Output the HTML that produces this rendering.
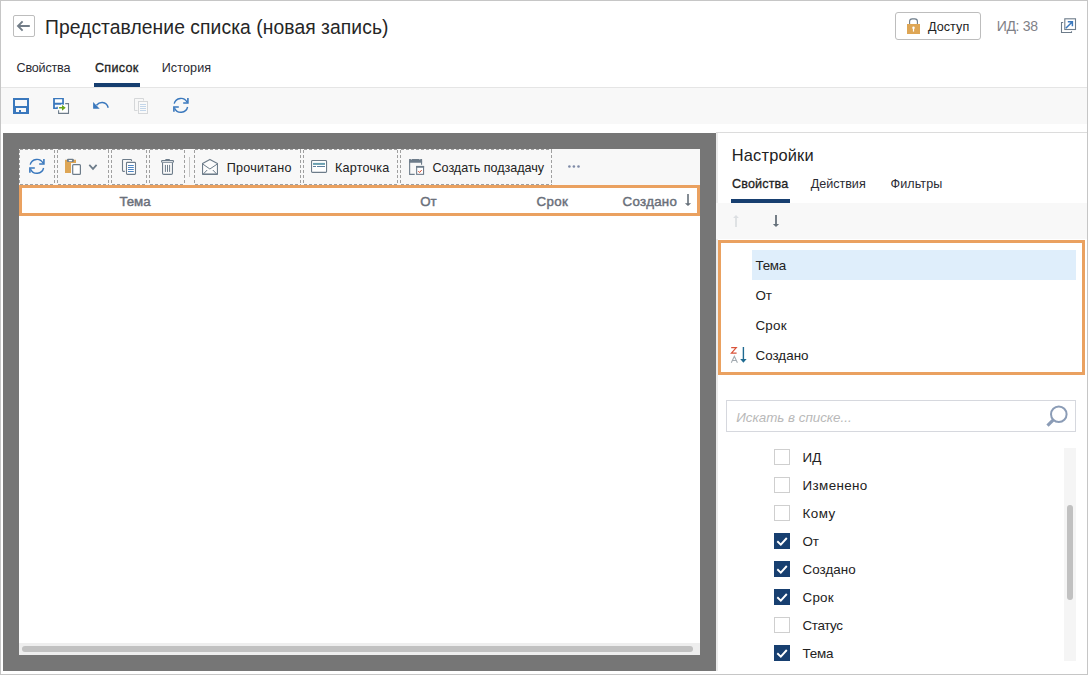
<!DOCTYPE html>
<html lang="ru">
<head>
<meta charset="utf-8">
<title>Представление списка</title>
<style>
html,body{margin:0;padding:0;}
body{width:1088px;height:675px;overflow:hidden;background:#fff;position:relative;font-family:"Liberation Sans",sans-serif;}
.a{position:absolute;box-sizing:border-box;}
.t{position:absolute;white-space:nowrap;line-height:1;font-family:"Liberation Sans",sans-serif;}
svg{position:absolute;overflow:visible;}
.d{position:absolute;box-sizing:border-box;top:149px;height:36px;
background:
 repeating-linear-gradient(90deg,#a0a0a0 0 3px,transparent 3px 5px) 1px 0/100% 1px no-repeat,
 repeating-linear-gradient(90deg,#a0a0a0 0 3px,transparent 3px 5px) 1px 100%/100% 1px no-repeat,
 repeating-linear-gradient(180deg,#a0a0a0 0 3px,transparent 3px 5px) 0 1px/1px 100% no-repeat,
 repeating-linear-gradient(180deg,#a0a0a0 0 3px,transparent 3px 5px) 100% 1px/1px 100% no-repeat;}
.cb{position:absolute;box-sizing:border-box;width:16px;height:16px;left:774px;border:1px solid #cfcfcf;background:#fff;}
.cb.on{border:none;background:#173f70;}
</style>
</head>
<body>
<!-- page frame -->
<div class="a" style="left:0;top:0;width:1088px;height:675px;border:1px solid #c6c6c6;"></div>

<!-- header: back button -->
<div class="a" style="left:13px;top:15px;width:22px;height:22px;border:1px solid #bdbdbd;border-radius:2px;"></div>
<svg style="left:13px;top:15px" width="22" height="22" viewBox="0 0 22 22"><path d="M16.8 11H5.2M9.6 6.4L5 11l4.600 4.600" fill="none" stroke="#727d88" stroke-width="1.9" stroke-linecap="butt" stroke-linejoin="miter"/></svg>

<!-- access button -->
<div class="a" style="left:895px;top:12px;width:86px;height:28px;border:1px solid #bdbdbd;border-radius:3px;"></div>
<svg style="left:905px;top:16px" width="18" height="20" viewBox="0 0 18 20">
  <path d="M4.600 8.500V5.600Q4.600 2.900 7.300 2.900H9.700Q12.400 2.900 12.400 5.600V8.500" fill="none" stroke="#6d7c8a" stroke-width="1.100"/>
  <rect x="2" y="8" width="13" height="10" fill="#dea655"/>
  <circle cx="8.500" cy="11.800" r="1.250" fill="#fff"/>
  <rect x="7.900" y="12" width="1.200" height="3.600" fill="#fff"/>
</svg>

<!-- popup icon -->
<svg style="left:1060px;top:17px" width="18" height="18" viewBox="0 0 18 18">
  <path d="M3.200 5.500H1.500V15.500H11.500V14.200" fill="none" stroke="#6d7c8a" stroke-width="1.100"/>
  <rect x="4.800" y="1.800" width="10.700" height="10.700" fill="#fff" stroke="#6d7c8a" stroke-width="1.100"/>
  <path d="M5.800 11.300L11.900 5.200M7.800 4.700H12.400V9.300" fill="none" stroke="#3a78bd" stroke-width="1.500"/>
</svg>

<!-- tabs underline + separator -->
<div class="a" style="left:94px;top:83px;width:46px;height:4px;background:#173f70;"></div>
<div class="a" style="left:1px;top:87px;width:1086px;height:1px;background:#e5e5e5;"></div>
<!-- main toolbar -->
<div class="a" style="left:1px;top:88px;width:1086px;height:36px;background:#f8f8f8;"></div>

<!-- save -->
<svg style="left:13px;top:98px" width="16" height="16" viewBox="0 0 16 16">
  <path fill-rule="evenodd" fill="#3a78bd" d="M0 0H16V16H0Z M2 2V8H14V2Z M3 10V14H6V12H8V14H13V10Z"/>
</svg>
<!-- save and close -->
<svg style="left:53px;top:98px" width="17" height="16" viewBox="0 0 17 16">
  <path d="M12.200 5.600H15.500V15.400H5.600V12.200" fill="#fff" stroke="none"/>
  <rect x="5.600" y="5.600" width="9.900" height="9.800" fill="#fff"/>
  <path d="M12.200 5.600H15.500V15.400H5.600V12.200" fill="none" stroke="#6d7c8a" stroke-width="1.100"/>
  <rect x="-0.500" y="-0.500" width="12" height="12.100" fill="#fbfbfb"/>
  <rect x="1.900" y="1.200" width="7.300" height="3.500" fill="#fff"/>
  <path fill="#3a78bd" d="M0.100 0.100H10.900V6.700H9.200V1.200H1.900V4.700H10.900V6.800H1.900V9.400H3.500V8.700H4.800V11H0.100Z"/>
  <path d="M6.100 9.100H9V7L12.700 9.850L9 12.700V10.600H6.100Z" fill="#6aa51a" stroke="#fff" stroke-width="1.200" paint-order="stroke"/>
</svg>
<!-- undo -->
<svg style="left:93px;top:98px" width="17" height="16" viewBox="0 0 17 16">
  <path d="M0.100 4V10.800H6.700Z" fill="#3a78bd"/>
  <path d="M3.500 7.200C5.500 4.800 8 4.400 9.500 4.500C12.500 4.800 14.500 6.800 15.200 9.700" fill="none" stroke="#3a78bd" stroke-width="1.500"/>
</svg>
<!-- copy disabled -->
<svg style="left:133px;top:97px" width="17" height="18" viewBox="0 0 17 18">
  <path d="M4.500 13.500H1.500V1.500H10.500V3.500" fill="none" stroke="#d5d7d9" stroke-width="1"/>
  <rect x="5.500" y="4.500" width="9" height="12" fill="#fafafa" stroke="#d5d7d9" stroke-width="1"/>
  <path d="M7 7.500H13M7 9.500H13M7 11.500H13M7 13.500H13" stroke="#c3d6ea" stroke-width="1"/>
</svg>
<!-- refresh -->
<svg style="left:173px;top:98px" width="16" height="16" viewBox="0 0 16 16">
  <path d="M1.200 5.600A6.900 6.900 0 0 1 14.100 4.300" fill="none" stroke="#3a78bd" stroke-width="1.400"/>
  <path d="M14.600 9A6.900 6.900 0 0 1 1.600 10.200" fill="none" stroke="#3a78bd" stroke-width="1.400"/>
  <path d="M15.700 0.100V5.800H10.200V4.300H14.100V0.100Z" fill="#3a78bd"/>
  <path d="M0.100 13.800V8.300H5.800V9.800H1.700V13.800Z" fill="#3a78bd"/>
</svg>

<!-- dark designer area -->
<div class="a" style="left:3px;top:133px;width:713px;height:538px;background:#767676;"></div>
<div class="a" style="left:716px;top:133px;width:2px;height:538px;background:#ececec;"></div>
<div class="a" style="left:716px;top:132px;width:371px;height:1px;background:#dcdcdc;"></div>

<!-- inner list panel -->
<div class="a" style="left:19px;top:149px;width:681px;height:506px;background:#fff;"></div>
<div class="a" style="left:19px;top:149px;width:681px;height:36px;background:#f8f8f8;"></div>
<div class="d" style="left:19px;width:36px;"></div>
<div class="d" style="left:57px;width:52px;"></div>
<div class="d" style="left:111px;width:36px;"></div>
<div class="d" style="left:149px;width:36px;"></div>
<div class="a" style="left:189px;top:157px;width:1px;height:20px;background:#c9c9c9;"></div>
<div class="d" style="left:194px;width:107px;"></div>
<div class="d" style="left:303px;width:95px;"></div>
<div class="d" style="left:400px;width:152px;"></div>

<!-- list refresh -->
<svg style="left:29px;top:159px" width="16" height="16" viewBox="0 0 16 16">
  <path d="M1.200 5.600A6.900 6.900 0 0 1 14.100 4.300" fill="none" stroke="#3a78bd" stroke-width="1.400"/>
  <path d="M14.600 9A6.900 6.900 0 0 1 1.600 10.200" fill="none" stroke="#3a78bd" stroke-width="1.400"/>
  <path d="M15.700 0.100V5.800H10.200V4.300H14.100V0.100Z" fill="#3a78bd"/>
  <path d="M0.100 13.800V8.300H5.800V9.800H1.700V13.800Z" fill="#3a78bd"/>
</svg>
<!-- paste -->
<svg style="left:65px;top:159px" width="17" height="17" viewBox="0 0 17 17">
  <path d="M0 0.800H11V3.900H6V14.100H0Z" fill="#dea655"/>
  <rect x="1.900" y="-0.200" width="7" height="3.300" rx="1.300" fill="#6d7c8a"/>
  <rect x="3.700" y="0.900" width="3.400" height="1.300" rx="0.500" fill="#fff"/>
  <rect x="6.500" y="4.500" width="10.100" height="12.100" fill="#f8f8f8"/>
  <rect x="7.700" y="5.700" width="7.700" height="9.700" rx="0.900" fill="#fff" stroke="#6d7c8a" stroke-width="1.200"/>
</svg>
<svg style="left:88px;top:163px" width="10" height="8" viewBox="0 0 10 8"><path d="M1.300 1.900L5 5.900L8.600 1.900" fill="none" stroke="#6d7c8a" stroke-width="1.700"/></svg>
<!-- copy -->
<svg style="left:121px;top:158px" width="17" height="18" viewBox="0 0 17 18">
  <path d="M3.800 13.400H2.300Q1.500 13.400 1.500 12.600V2.300Q1.500 1.500 2.300 1.500H9.700Q10.500 1.500 10.500 2.300V2.900" fill="none" stroke="#6d7c8a" stroke-width="1.100"/>
  <rect x="5.500" y="4.400" width="9" height="12" rx="0.800" fill="#fff" stroke="#6d7c8a" stroke-width="1.100"/>
  <path d="M7 7.500H12.800M7 9.500H12.800M7 11.500H12.800M7 13.500H12.800" stroke="#3a78bd" stroke-width="0.900"/>
</svg>
<!-- trash -->
<svg style="left:160px;top:158px" width="16" height="18" viewBox="0 0 16 18">
  <rect x="5.300" y="1.100" width="4.600" height="1.200" rx="0.400" fill="#6d7c8a"/>
  <path d="M2.550 4.800V15.200Q2.550 16.400 3.750 16.400H11.250Q12.450 16.400 12.450 15.200V4.800" fill="#fafafa" stroke="#6d7c8a" stroke-width="1.100"/>
  <rect x="1.550" y="2.550" width="12" height="1.750" rx="0.870" fill="#fff" stroke="#6d7c8a" stroke-width="1.100"/>
  <path d="M5.400 6.900V13.900M7.500 6.900V13.900M9.600 6.900V13.900" stroke="#6d7c8a" stroke-width="1"/>
</svg>
<!-- read envelope -->
<svg style="left:201px;top:158px" width="18" height="18" viewBox="0 0 18 18">
  <path d="M1.550 5.600L8.900 1.400L16.450 5.600V16.300H1.550Z" fill="#fcfcfc" stroke="#6d7c8a" stroke-width="1.100" stroke-linejoin="round"/>
  <path d="M1.700 6L8.900 11L16.300 6M2.500 15.800L6.200 12M15.500 15.800L11.800 12" fill="none" stroke="#6d7c8a" stroke-width="1"/>
  <path d="M1.500 16.300H16.500" stroke="#6d7c8a" stroke-width="1.400"/>
</svg>
<!-- card -->
<svg style="left:311px;top:160px" width="17" height="13" viewBox="0 0 17 13">
  <rect x="0.550" y="0.550" width="15" height="11.800" rx="0.900" fill="#fff" stroke="#6d7c8a" stroke-width="1.100"/>
  <rect x="2" y="2.900" width="12" height="2" fill="#6a9fb0"/>
  <path d="M2 6.500H5M6 6.500H14" stroke="#5d7e9d" stroke-width="1"/>
</svg>
<!-- create subtask -->
<svg style="left:408px;top:158px" width="17" height="18" viewBox="0 0 17 18">
  <path d="M6.700 16.400H1.650V3H13.550V6.800" fill="none" stroke="#6d7c8a" stroke-width="1.100"/>
  <path d="M1.100 1H2.800V1.600H4V1H11.200V1.600H12.400V1H14.100V4.700H1.100Z" fill="#6d7c8a"/>
  <rect x="8.650" y="8.450" width="6.900" height="7.900" fill="#fff" stroke="#6d7c8a" stroke-width="1.100"/>
  <path d="M8.100 7.900H9.200V8.300H10.200V7.900H14V8.300H15V7.900H16.100V9.700H8.100Z" fill="#6d7c8a"/>
  <path d="M10.300 13L11.600 14.600L13.700 12" fill="none" stroke="#d9533a" stroke-width="1"/>
</svg>
<!-- ellipsis -->
<svg style="left:566px;top:163px" width="16" height="7" viewBox="0 0 16 7"><circle cx="3.400" cy="3.500" r="1.300" fill="#7e8aa7"/><circle cx="7.900" cy="3.500" r="1.300" fill="#7e8aa7"/><circle cx="12.500" cy="3.500" r="1.300" fill="#7e8aa7"/></svg>

<!-- column header highlighted -->
<div class="a" style="left:19px;top:185px;width:681px;height:31px;border:3px solid #eaa160;background:#fff;"></div>
<svg style="left:684px;top:193px" width="8" height="14" viewBox="0 0 8 14"><path d="M3.200 1H4.800V10.200H7.100L4 13L0.900 10.200H3.200Z" fill="#66707a"/></svg>

<!-- list h-scrollbar -->
<div class="a" style="left:19px;top:643px;width:681px;height:12px;background:#eeeeee;"></div>
<div class="a" style="left:22px;top:646px;width:671px;height:6px;background:#c1c1c1;border-radius:3px;"></div>

<!-- right panel -->
<div class="a" style="left:731px;top:199px;width:59px;height:4px;background:#173f70;"></div>
<div class="a" style="left:716px;top:203px;width:371px;height:36px;background:#f8f8f8;"></div>
<svg style="left:732px;top:214px" width="8" height="14" viewBox="0 0 8 14"><path d="M3.100 12.900H4.900V3.900H6.900L4 1.100L1.100 3.900H3.100Z" fill="#dcdfe2"/></svg>
<svg style="left:772px;top:214px" width="8" height="14" viewBox="0 0 8 14"><path d="M3.100 0.900H4.900V10.100H7.100L4 13L0.900 10.100H3.100Z" fill="#66717b"/></svg>

<div class="a" style="left:718px;top:240px;width:367px;height:135px;border:3px solid #eaa160;background:#fff;"></div>
<div class="a" style="left:752px;top:250px;width:324px;height:30px;background:#dfeefb;"></div>
<!-- sort icon Z-A -->
<svg style="left:730px;top:346px" width="18" height="18" viewBox="0 0 18 18">
  <path d="M1.200 1.600H6.300L1.400 7.200H6.600" fill="none" stroke="#d9533a" stroke-width="1.200"/>
  <path d="M1.300 16.700L4.350 10.200L7.400 16.700M2.400 14.500H6.300" fill="none" stroke="#a3abb1" stroke-width="1.100"/>
  <path d="M13.400 1V14" fill="none" stroke="#1f6a91" stroke-width="1.400"/>
  <path d="M10.200 13H16.600L13.400 16.800Z" fill="#1f6a91"/>
</svg>

<!-- search -->
<div class="a" style="left:726px;top:400px;width:350px;height:32px;border:1px solid #d6d8de;background:#fff;"></div>
<svg style="left:1044px;top:403px" width="26" height="26" viewBox="0 0 26 26">
  <circle cx="14.800" cy="11.200" r="7.800" fill="none" stroke="#8b9cb6" stroke-width="2"/>
  <path d="M9.300 16.800L3.500 22.600" stroke="#8b9cb6" stroke-width="3.200"/>
</svg>

<!-- checklist -->
<div class="cb" style="top:449px"></div>
<div class="cb" style="top:477px"></div>
<div class="cb" style="top:505px"></div>
<div class="cb on" style="top:533px"></div>
<div class="cb on" style="top:561px"></div>
<div class="cb on" style="top:589px"></div>
<div class="cb" style="top:617px"></div>
<div class="cb on" style="top:645px"></div>
<svg style="left:774px;top:533px" width="16" height="16" viewBox="0 0 16 16"><path d="M3.300 8.300L6.800 11.600L12.800 5" fill="none" stroke="#fff" stroke-width="1.900"/></svg>
<svg style="left:774px;top:561px" width="16" height="16" viewBox="0 0 16 16"><path d="M3.300 8.300L6.800 11.600L12.800 5" fill="none" stroke="#fff" stroke-width="1.900"/></svg>
<svg style="left:774px;top:589px" width="16" height="16" viewBox="0 0 16 16"><path d="M3.300 8.300L6.800 11.600L12.800 5" fill="none" stroke="#fff" stroke-width="1.900"/></svg>
<svg style="left:774px;top:645px" width="16" height="16" viewBox="0 0 16 16"><path d="M3.300 8.300L6.800 11.600L12.800 5" fill="none" stroke="#fff" stroke-width="1.900"/></svg>

<!-- checklist v-scrollbar -->
<div class="a" style="left:1064px;top:448px;width:12px;height:213px;background:#f5f5f5;"></div>
<div class="a" style="left:1067px;top:505px;width:6px;height:95px;background:#c1c1c1;border-radius:3px;"></div>

<!-- texts -->
<span class="t" style="left:45.0px;top:18.00px;font-size:19.3px;color:#262626;letter-spacing:0.070px">Представление списка (новая запись)</span>
<span class="t" style="left:16.5px;top:62.00px;font-size:12.6px;color:#2b2b33;letter-spacing:-0.189px">Свойства</span>
<span class="t" style="left:95.0px;top:62.00px;font-size:12.6px;color:#222;letter-spacing:0.266px;-webkit-text-stroke:0.3px currentColor">Список</span>
<span class="t" style="left:161.7px;top:62.00px;font-size:12.6px;color:#2b2b33;letter-spacing:0.094px">История</span>
<span class="t" style="left:928.0px;top:21.00px;font-size:12.6px;color:#222;letter-spacing:0.050px">Доступ</span>
<span class="t" style="left:996.7px;top:19.00px;font-size:14px;color:#7f8187;letter-spacing:-0.318px">ИД: 38</span>
<span class="t" style="left:226.7px;top:162.00px;font-size:12.6px;color:#222;letter-spacing:0.226px">Прочитано</span>
<span class="t" style="left:335.0px;top:162.00px;font-size:12.6px;color:#222;letter-spacing:0.202px">Карточка</span>
<span class="t" style="left:432.5px;top:162.00px;font-size:12.6px;color:#222;letter-spacing:-0.028px">Создать подзадачу</span>
<span class="t" style="left:119.5px;top:195.00px;font-size:13.3px;color:#6a6f7a;letter-spacing:-0.078px;-webkit-text-stroke:0.45px currentColor">Тема</span>
<span class="t" style="left:420.2px;top:195.00px;font-size:13.3px;color:#6a6f7a;letter-spacing:0.081px;-webkit-text-stroke:0.45px currentColor">От</span>
<span class="t" style="left:536.4px;top:195.00px;font-size:13.3px;color:#6a6f7a;letter-spacing:0.395px;-webkit-text-stroke:0.45px currentColor">Срок</span>
<span class="t" style="left:622.6px;top:195.00px;font-size:13.3px;color:#6a6f7a;letter-spacing:0.293px;-webkit-text-stroke:0.45px currentColor">Создано</span>
<span class="t" style="left:731.8px;top:147.00px;font-size:16.4px;color:#222;letter-spacing:0.181px">Настройки</span>
<span class="t" style="left:732.0px;top:178.00px;font-size:12.6px;color:#222;letter-spacing:0.136px;-webkit-text-stroke:0.3px currentColor">Свойства</span>
<span class="t" style="left:810.7px;top:178.00px;font-size:12.6px;color:#2b2b33;letter-spacing:-0.023px">Действия</span>
<span class="t" style="left:890.6px;top:178.00px;font-size:12.6px;color:#2b2b33;letter-spacing:0.049px">Фильтры</span>
<span class="t" style="left:755.5px;top:259.00px;font-size:13.4px;color:#222;letter-spacing:-0.258px">Тема</span>
<span class="t" style="left:755.5px;top:289.00px;font-size:13.4px;color:#222;letter-spacing:-0.181px">От</span>
<span class="t" style="left:755.5px;top:319.00px;font-size:13.4px;color:#222;letter-spacing:0.191px">Срок</span>
<span class="t" style="left:755.5px;top:349.00px;font-size:13.4px;color:#222;letter-spacing:0.011px">Создано</span>
<span class="t" style="left:736.3px;top:411.00px;font-size:13.4px;color:#b9b9b9;letter-spacing:-0.028px;font-style:italic">Искать в списке...</span>
<span class="t" style="left:802.6px;top:451.00px;font-size:13.4px;color:#222;letter-spacing:0.148px">ИД</span>
<span class="t" style="left:802.6px;top:479.00px;font-size:13.4px;color:#222;letter-spacing:0.361px">Изменено</span>
<span class="t" style="left:802.6px;top:507.00px;font-size:13.4px;color:#222;letter-spacing:0.422px">Кому</span>
<span class="t" style="left:802.6px;top:535.00px;font-size:13.4px;color:#222;letter-spacing:-0.181px">От</span>
<span class="t" style="left:802.6px;top:563.00px;font-size:13.4px;color:#222;letter-spacing:0.011px">Создано</span>
<span class="t" style="left:802.6px;top:591.00px;font-size:13.4px;color:#222;letter-spacing:0.191px">Срок</span>
<span class="t" style="left:802.6px;top:619.00px;font-size:13.4px;color:#222;letter-spacing:-0.391px">Статус</span>
<span class="t" style="left:802.6px;top:647.00px;font-size:13.4px;color:#222;letter-spacing:-0.258px">Тема</span>
</body>
</html>
